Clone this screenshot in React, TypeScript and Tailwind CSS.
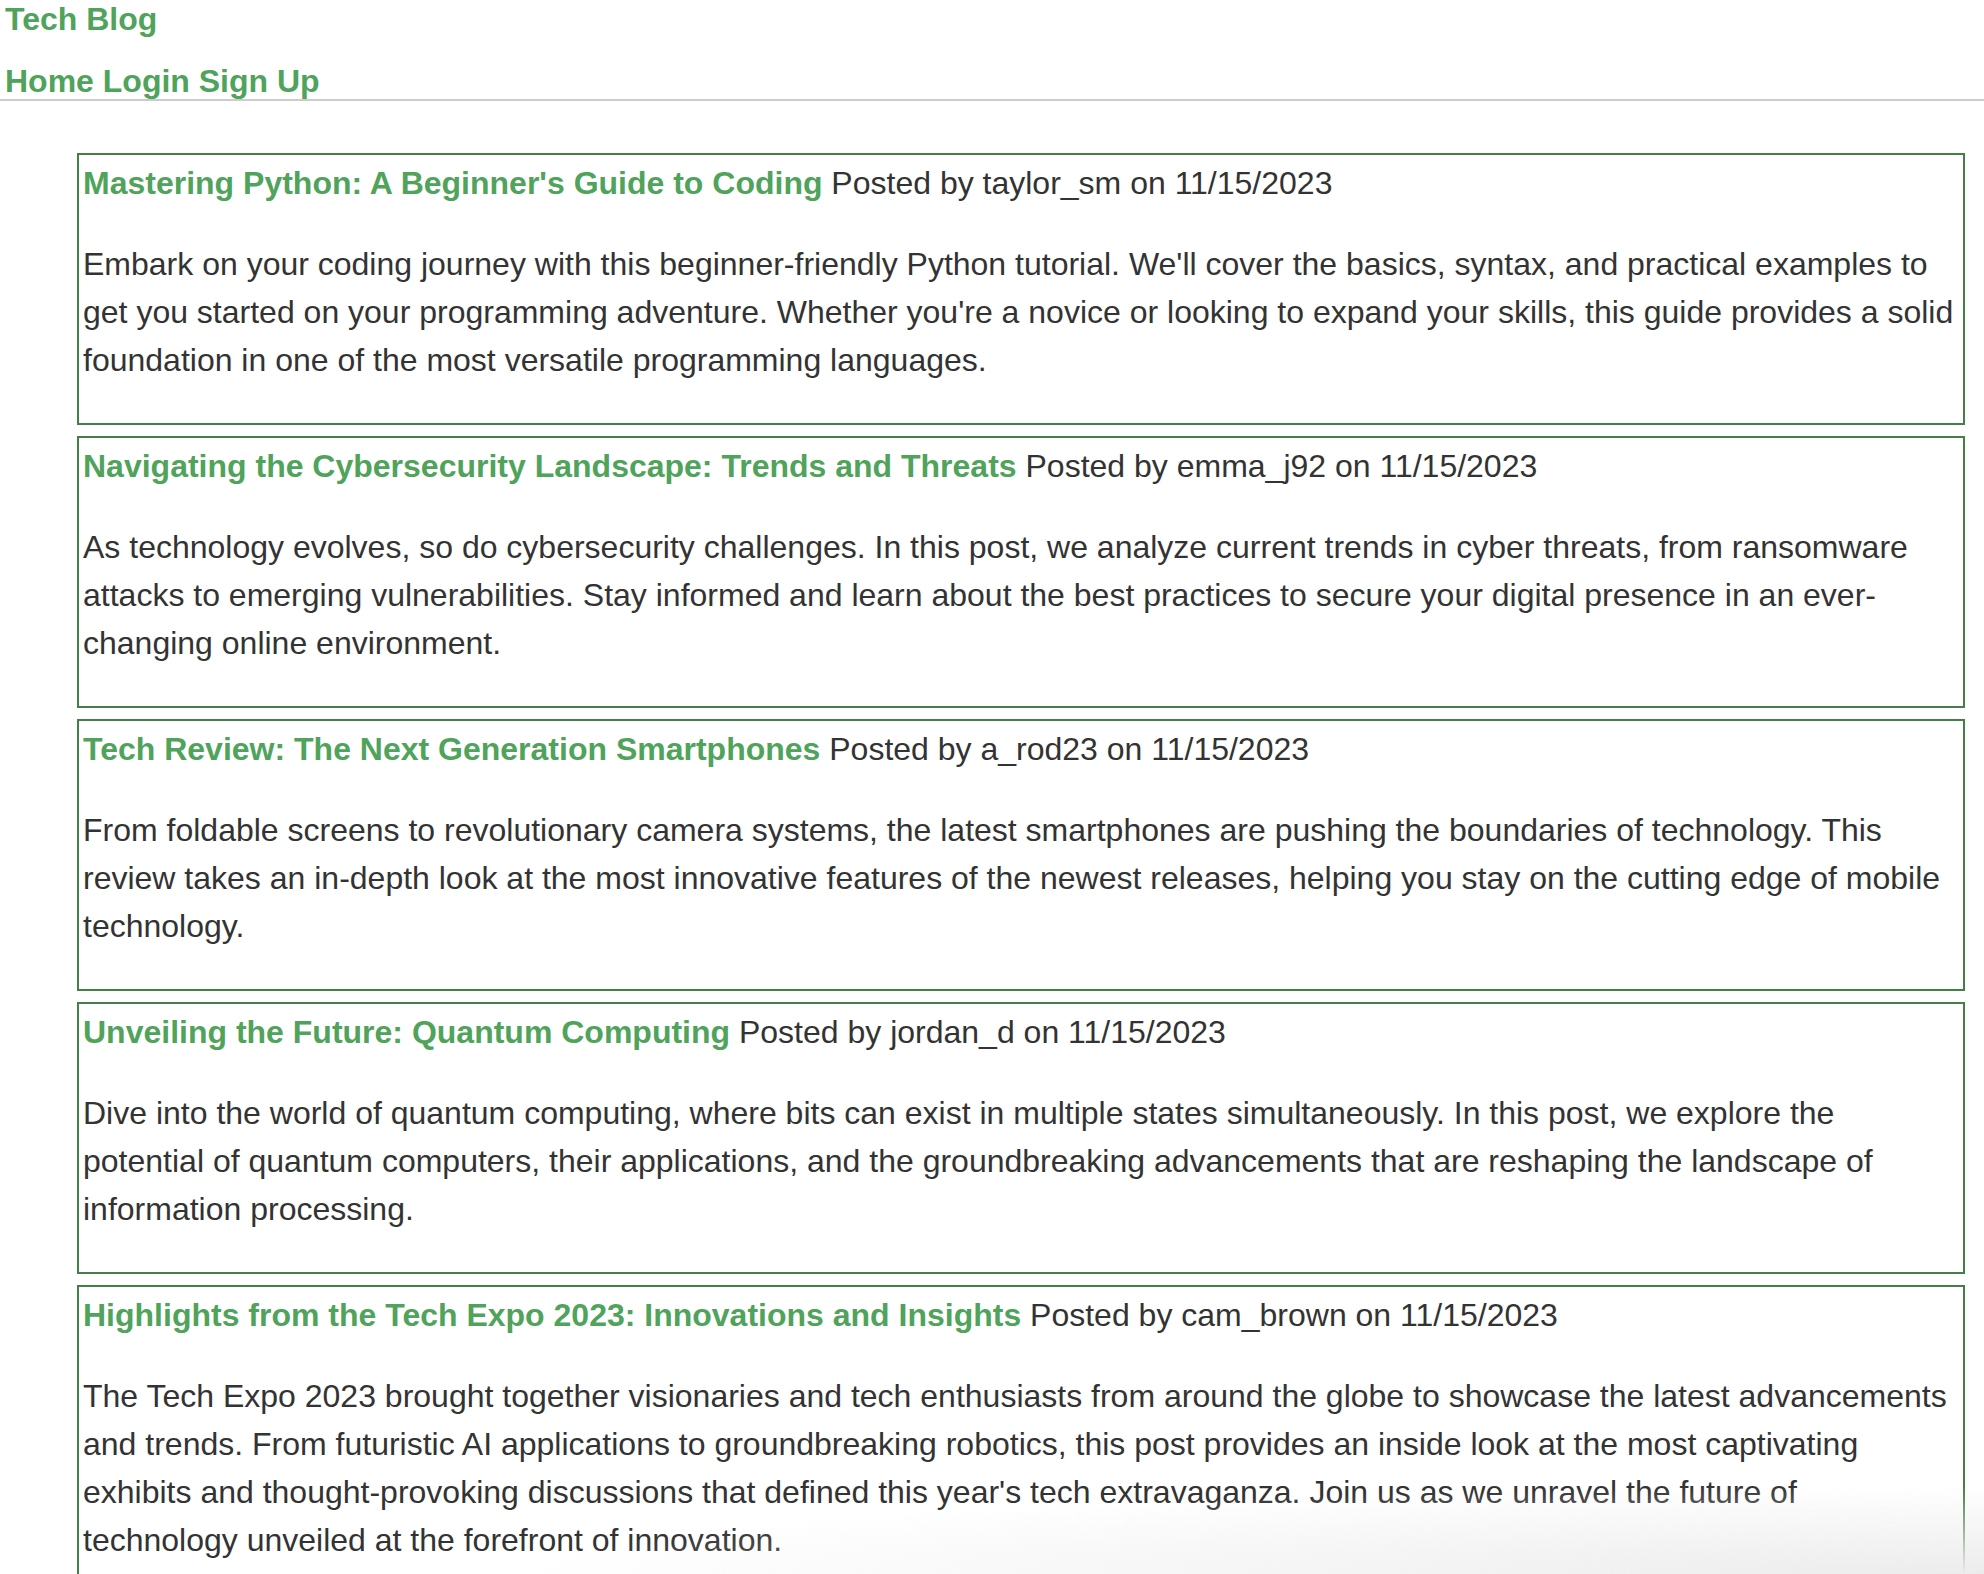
import React from 'react';

const posts = [
  {
    title: "Mastering Python: A Beginner's Guide to Coding",
    author: 'taylor_sm',
    date: '11/15/2023',
    body: "Embark on your coding journey with this beginner-friendly Python tutorial. We'll cover the basics, syntax, and practical examples to get you started on your programming adventure. Whether you're a novice or looking to expand your skills, this guide provides a solid foundation in one of the most versatile programming languages.",
  },
  {
    title: 'Navigating the Cybersecurity Landscape: Trends and Threats',
    author: 'emma_j92',
    date: '11/15/2023',
    body: 'As technology evolves, so do cybersecurity challenges. In this post, we analyze current trends in cyber threats, from ransomware attacks to emerging vulnerabilities. Stay informed and learn about the best practices to secure your digital presence in an ever-changing online environment.',
  },
  {
    title: 'Tech Review: The Next Generation Smartphones',
    author: 'a_rod23',
    date: '11/15/2023',
    body: 'From foldable screens to revolutionary camera systems, the latest smartphones are pushing the boundaries of technology. This review takes an in-depth look at the most innovative features of the newest releases, helping you stay on the cutting edge of mobile technology.',
  },
  {
    title: 'Unveiling the Future: Quantum Computing',
    author: 'jordan_d',
    date: '11/15/2023',
    body: 'Dive into the world of quantum computing, where bits can exist in multiple states simultaneously. In this post, we explore the potential of quantum computers, their applications, and the groundbreaking advancements that are reshaping the landscape of information processing.',
  },
  {
    title: 'Highlights from the Tech Expo 2023: Innovations and Insights',
    author: 'cam_brown',
    date: '11/15/2023',
    body: "The Tech Expo 2023 brought together visionaries and tech enthusiasts from around the globe to showcase the latest advancements and trends. From futuristic AI applications to groundbreaking robotics, this post provides an inside look at the most captivating exhibits and thought-provoking discussions that defined this year's tech extravaganza. Join us as we unravel the future of technology unveiled at the forefront of innovation.",
  },
];

const App: React.FC = () => {
  return (
    <div className="relative min-h-screen bg-white font-['Liberation_Sans',Arial,sans-serif] text-[32px] text-[#333333]">
      <header className="border-b-2 border-[#cccccc] pt-px pl-[5px]">
        <h1 className="leading-[37px] font-bold text-[#4fa35b]">Tech Blog</h1>
        <nav className="mt-[25px] leading-[36px] font-bold text-[#4fa35b]">
          <a href="#">Home</a> <a href="#">Login</a> <a href="#">Sign Up</a>
        </nav>
      </header>
      <main className="mt-[52px] ml-[77px] mr-[19px] flex flex-col gap-[11px]">
        {/* post cards */}
        {posts.map((post) => (
          <section key={post.title} className="border-2 border-[#477d46] px-1 pt-1 pb-[39px]">
            <div className="leading-[48px]">
              <a href="#" className="font-bold text-[#4fa35b]">{post.title}</a> Posted by {post.author} on {post.date}
            </div>
            <p className="mt-[33px] leading-[48px]">{post.body}</p>
          </section>
        ))}
      </main>
      <div className="pointer-events-none fixed bottom-0 right-0 h-[90px] w-[75%] bg-[radial-gradient(ellipse_at_bottom_right,#ececec,transparent_70%)]" />
    </div>
  );
};

export default App;
